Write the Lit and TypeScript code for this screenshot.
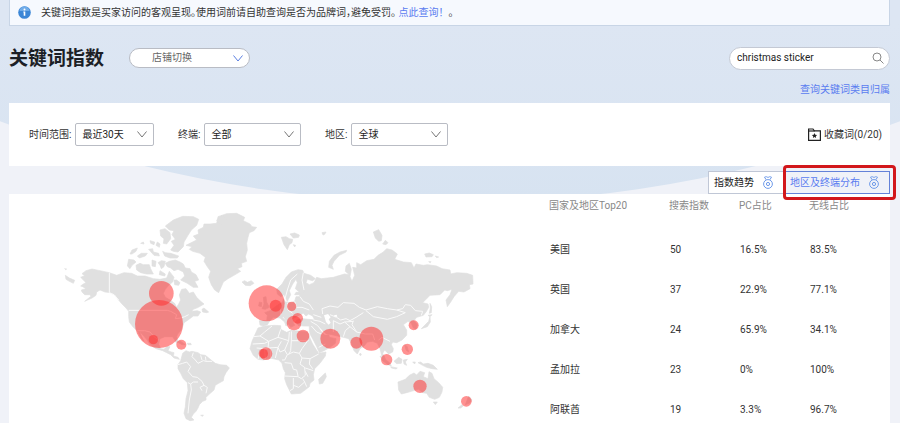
import { LitElement, html, svg, css } from "lit";
import { customElement, property } from "lit/decorators.js";

interface Row {
  country: string;
  index: number;
  pc: string;
  wireless: string;
}

const ROWS: Row[] = [
  { country: "美国", index: 50, pc: "16.5%", wireless: "83.5%" },
  { country: "英国", index: 37, pc: "22.9%", wireless: "77.1%" },
  { country: "加拿大", index: 24, pc: "65.9%", wireless: "34.1%" },
  { country: "孟加拉", index: 23, pc: "0%", wireless: "100%" },
  { country: "阿联酋", index: 19, pc: "3.3%", wireless: "96.7%" },
];

// Land outlines, grouped by region; each group has its own origin on the map.
const AMERICAS = [
  // mainland
  "M92 232L104 227 96 221 108 212 126 207 150 212 178 218 200 226 222 218 245 220 262 228 285 228 310 236 330 238 350 234 358 214 366 224 372 232 368 246 356 256 346 268 340 280 346 292 360 300 374 310 380 322 386 312 392 300 388 285 395 268 408 266 418 280 430 276 440 292 452 304 462 312 445 322 430 328 425 334 442 332 452 336 444 348 430 348 414 360 402 368 398 380 392 392 383 402 380 410 384 424 380 430 374 420 368 410 345 410 330 416 326 432 332 446 342 448 350 440 360 440 354 452 364 456 372 458 370 468 384 472 388 478 372 474 362 464 350 458 338 452 318 446 300 434 290 418 276 402 268 392 274 408 282 424 274 416 262 392 250 382 238 366 236 350 236 334 228 324 216 312 204 298 196 286 182 278 165 276 150 270 140 276 138 286 126 294 104 304 124 288 118 284 104 284 96 276 94 270 108 266 98 260 92 258 100 252 108 248 Z",
  "M46 226L58 234 74 241 70 250 58 244 48 238Z",
  "M44 206L50 207 47 209Z",
  // arctic islands
  "M236 178L252 180 258 186 246 196 240 206 232 198Z",
  "M258 196L270 190 280 194 298 194 302 206 310 222 290 222 272 218 260 210Z",
  "M240 162L246 150 262 144 258 154 246 162Z",
  "M262 168L274 160 292 160 286 168 268 174Z",
  "M300 122L314 126 312 134 302 130Z",
  "M272 130L280 126 282 132Z",
  "M296 148L308 146 310 156 326 160 328 168 312 166Z",
  "M330 90L345 86 360 98 362 116 350 132 340 130 342 116 332 108Z",
  "M346 78L370 60 398 49 430 50 446 58 440 76 424 90 414 106 402 126 400 140 384 156 370 154 362 150 372 136 364 124 376 118 366 104 372 92 358 90Z",
  "M338 154L346 158 362 160 386 168 382 174 360 174 344 168Z",
  "M322 126L330 132 328 142 318 136Z",
  "M306 180L318 184 316 200 306 198Z",
  "M324 188L334 182 346 184 342 200 334 206 330 196Z",
  "M346 190L358 184 376 180 390 186 400 192 406 204 420 206 424 216 438 224 446 240 434 244 444 262 430 262 412 250 392 240 404 228 400 216 384 208 372 212 362 204 352 200Z",
  "M330 212L346 222 344 228 328 224Z",
  "M372 240L380 240 390 248 386 256 374 254Z",
  "M456 328L462 324 476 336 470 338 458 336Z",
  "M378 424L392 424 406 434 396 434Z",
  "M412 430L422 430 424 434 414 434Z",
  // south america
  "M398 460L408 452 418 456 426 454 444 458 452 464 466 466 476 474 488 484 496 490 510 494 530 496 538 504 528 518 522 530 520 542 506 550 496 556 492 570 476 584 468 592 468 600 458 604 448 614 444 624 438 634 430 642 424 652 432 660 420 662 408 656 402 640 406 620 408 596 414 572 412 548 400 536 392 520 384 506 384 494 392 482Z",
  "M452 646L460 645 458 649Z",
  // greenland, iceland
  "M408 136L420 130 440 120 430 108 446 102 444 90 460 82 462 72 480 72 500 70 504 50 530 41 560 40 584 52 580 62 600 72 606 80 620 82 612 92 598 98 594 112 590 130 592 150 586 170 590 184 574 190 576 200 562 206 572 214 552 226 534 236 520 246 514 260 506 278 494 270 484 254 476 232 482 214 472 200 462 184 466 172 450 160 428 154 418 148 426 140Z",
  "M500 60L516 46 530 60 512 76Z",
  "M576 246L584 242 592 247 604 242 612 250 600 257 586 256Z",
];

const EURASIA = [
  "M30 375L28 362 50 362 52 346 44 338 60 332 76 320 88 312 98 306 100 298 106 306 124 308 134 304 138 290 148 290 150 284 134 284 138 277 164 276 148 276 136 266 142 248 138 238 128 252 118 272 122 284 112 304 102 284 92 290 82 282 80 268 96 252 108 232 124 216 144 209 158 211 162 220 182 226 196 236 188 242 172 238 168 248 178 254 192 248 200 232 214 236 232 234 250 232 270 226 284 222 298 224 286 214 288 198 298 190 304 208 300 230 306 244 314 226 308 202 320 204 320 188 332 194 350 182 372 178 384 166 400 156 410 146 426 150 442 162 434 178 460 186 484 188 492 204 498 192 520 196 532 194 560 198 576 206 600 210 602 222 620 218 650 220 668 226 669 252 658 254 660 266 642 276 626 274 612 290 602 306 592 320 588 300 600 284 606 268 592 272 584 270 570 284 540 286 518 308 534 312 536 322 528 336 520 346 500 352 492 362 502 374 498 388 490 384 484 370 474 364 460 374 470 390 470 406 456 420 440 428 428 426 424 434 430 446 428 456 416 462 404 450 398 460 406 476 396 470 390 446 382 430 368 424 352 426 342 438 330 446 322 462 312 452 304 430 296 416 280 412 262 408 246 404 236 402 238 412 258 416 256 430 240 442 222 452 208 458 200 440 190 420 180 402 178 388 178 378 160 378 144 376 136 366 140 360 158 356 176 358 194 360 188 348 176 342 168 348 160 340 150 344 140 350 128 356 130 368 134 376 122 382 112 366 100 350 96 352 110 364 118 370 108 378 104 366 90 354 70 352 60 362 52 374 40 378Z",
  "M40 292L48 290 50 306 58 322 46 328 36 326 42 312Z",
  "M28 306L36 308 34 320 26 318Z",
  // arctic islands
  "M94 112L108 110 118 116 128 118 126 128 118 134 112 149 102 134Z",
  "M120 102L134 99 148 105 146 112 130 114Z",
  "M130 134L137 136 134 141Z",
  "M216 98L228 96 224 103 219 105Z",
  "M236 202L238 184 252 166 270 156 290 151 288 156 268 166 252 184 246 196 250 208Z",
  "M370 96L386 89 396 106 394 122 386 124 376 114Z",
  "M398 132L406 121 414 128 408 134Z",
  "M524 162L538 159 550 164 546 170 528 171Z",
  "M556 168L566 171 560 173Z",
  "M536 185L543 185 541 188Z",
  // east and south-east asia
  "M540 310L545 320 544 338 538 340 541 324Z",
  "M534 346L546 344 540 350Z",
  "M540 350L541 366 532 380 514 386 528 372 536 364Z",
  "M394 432L410 428 424 440 428 452 414 458 406 448 396 446Z",
  "M390 468L402 474 420 490 424 498 414 494 398 482Z",
  "M422 500L442 504 438 507 424 504Z",
  "M432 484L446 472 456 478 454 490 440 491Z",
  "M460 480L472 478 466 486 470 496 462 492Z",
  "M464 434L472 440 476 456 468 450Z",
  "M330 460L334 462 332 467 328 464Z",
  "M504 488L512 486 520 492 534 490 550 496 562 508 546 506 530 502 518 496Z",
  "M488 486L496 486 494 492Z",
  // oceania
  "M444 546L466 538 478 526 492 519 500 525 510 514 524 518 520 530 534 536 537 515 546 520 552 536 566 548 578 562 576 576 568 592 554 598 538 592 530 580 518 578 506 568 484 574 470 578 454 582 446 570Z",
  "M550 606L562 606 556 614Z",
  "M656 588L666 600 658 610 646 614Z",
  "M624 624L636 614 640 618 632 624Z",
];

const AFRICA = [
  "M24 384L44 378 74 376 92 377 92 388 110 397 124 391 152 394 172 396 178 410 188 432 198 448 206 460 228 456 226 468 210 490 194 506 190 524 192 540 180 550 178 560 160 574 152 580 124 582 118 570 110 554 104 536 106 518 100 506 96 490 86 480 60 474 40 480 24 478 10 466 0 446 6 424 14 406Z",
  "M226 519L229 530 218 550 208 552 206 538 214 530Z",
];

const AMERICA_BORDERS =
  "M178 218V278L192 284 206 300M236 331H352L362 334 380 344 376 356 392 354 404 350 416 344M262 392H284L300 396 312 410 326 420M398 490L410 486 422 500 414 514 428 530 442 532 456 544 462 556 472 562 468 580M414 548L422 552 430 546 444 546M422 552L424 570 418 600 414 640M430 458L426 470 436 480 444 490 460 482 468 484 486 484M452 466L456 480M466 470L468 482M384 494L398 490M462 556L450 562 456 572";

const EURASIA_BORDERS =
  "M218 342L216 326 240 318 264 322 280 308 312 310 328 322 348 330 382 320 412 326 440 330 458 326 466 314 482 316 496 332 518 334 514 346M348 332L370 350 412 358 440 350 466 338 440 330M240 344L260 352 272 360 288 356 300 362 318 352 340 338M250 362L270 372 284 366 300 380 286 392 280 410M250 362L250 396M284 366L310 364M300 380L320 396 346 402 368 402 374 420M310 362L306 374 320 396M182 364L202 376 214 390M190 360L210 364 226 372M184 378L200 396 214 402M226 432L206 442M104 300L112 270 122 240 142 222M160 218L156 240 162 270M150 290L160 304 178 312 190 330M134 304L140 322 156 322 178 330M112 308L114 330 128 340M90 314L92 344M190 344L214 352M386 420L396 412 420 424";

const AFRICA_BORDERS =
  "M10 410L30 408 44 396 66 378M30 408L56 424 84 412 92 388M84 412L116 422 118 396M124 394V422H176M56 424L44 430 8 432M56 424L54 444 84 442 94 424M84 442L90 456 104 450 116 422M20 444L44 446 54 444M24 478L28 460M44 446L46 478M62 446V474M84 442L76 474M104 450L112 464 130 456 148 460 156 446 172 424M112 464L104 480H96M148 460L156 474 180 476 206 462M156 474L150 492 166 504 190 512M180 476L178 492 188 506M104 488L124 490 130 508 140 510 144 528M104 528L144 530 154 536 166 526 164 504M130 534V566L120 572M130 556L146 562 164 546 158 536M164 546L170 560M166 514L174 530M116 464L122 452 124 422";

const WATER = [
  "M222 346L234 342 242 352 236 358 242 368 236 374 228 366Z",
  "M208 384L218 392 228 402 238 404 224 404 214 394Z",
  "M252 346L260 344 262 350 254 352Z",
];

// Bubbles: centre x, centre y, radius.
const BUBBLES: [number, number, number][] = [
  [327, 372, 72],
  [334, 280, 37],
  [310, 419, 14],
  [394, 434, 15],
  [650, 310, 54],
  [677, 317, 18],
  [725, 319, 14],
  [732, 369, 22],
  [743, 355, 16],
  [759, 408, 19],
  [841, 416, 30],
  [919, 428, 18],
  [964, 416, 36],
  [648, 461, 19],
  [640, 461, 14],
  [1091, 376, 15],
  [1072, 448, 17],
  [1010, 479, 17],
  [1110, 559, 20],
  [1249, 604, 16],
];

@customElement("world-map")
export class WorldMap extends LitElement {
  static styles = css`
    :host {
      display: block;
    }
    svg {
      display: block;
      width: 100%;
      height: auto;
    }
    .land {
      fill: #e0e0e0;
      stroke: #e0e0e0;
      stroke-width: 2;
      stroke-linejoin: round;
    }
    .border {
      fill: none;
      stroke: #fafafa;
      stroke-width: 3;
      stroke-linejoin: round;
    }
    .water {
      fill: #fff;
    }
    .bubble {
      fill: #ff2d2d;
      fill-opacity: 0.52;
    }
  `;

  render() {
    return html`
      <svg viewBox="-123 -18 1620 687" role="img" aria-label="国家及地区分布">
        <g>
          ${AMERICAS.map((d) => svg`<path class="land" d=${d}></path>`)}
          <path class="border" d=${AMERICA_BORDERS}></path>
        </g>
        <g transform="translate(600 0)">
          ${EURASIA.map((d) => svg`<path class="land" d=${d}></path>`)}
          ${AFRICA.map((d) => svg`<path class="land" d=${d}></path>`)}
          ${WATER.map((d) => svg`<path class="water" d=${d}></path>`)}
          <path class="border" d=${EURASIA_BORDERS}></path>
          <path class="border" d=${AFRICA_BORDERS}></path>
        </g>
        ${BUBBLES.map(
          ([x, y, r]) => svg`<circle class="bubble" cx=${x} cy=${y} r=${r}></circle>`,
        )}
      </svg>
    `;
  }
}

@customElement("drop-down")
export class DropDown extends LitElement {
  @property() label = "";
  @property() value = "";
  @property({ reflect: true }) kind = "box";

  static styles = css`
    :host {
      display: flex;
      align-items: center;
      gap: 4px;
    }
    .label {
      font-size: 10px;
      color: #333;
      white-space: nowrap;
    }
    .field {
      display: grid;
      flex: 1;
      align-items: center;
    }
    select {
      grid-area: 1 / 1;
      appearance: none;
      box-sizing: border-box;
      width: 100%;
      height: 23px;
      margin: 0;
      padding: 0 20px 0 6px;
      border: 1px solid #b9bcc4;
      border-radius: 2px;
      background: #fff;
      color: #222;
      font: inherit;
      font-size: 10px;
    }
    svg {
      grid-area: 1 / 1;
      justify-self: end;
      width: 10px;
      height: 7px;
      margin-right: 7px;
      fill: none;
      stroke: #777;
      pointer-events: none;
    }
    :host([kind="pill"]) select {
      height: 20px;
      padding-left: 22px;
      border-radius: 10px;
      color: #666;
    }
    :host([kind="pill"]) svg {
      stroke: #5b7fe0;
    }
  `;

  render() {
    return html`
      ${this.label ? html`<label class="label" for="s">${this.label}</label>` : ""}
      <span class="field">
        <select id="s" aria-label=${this.label || this.value}>
          <option>${this.value}</option>
        </select>
        <svg viewBox="0 0 10 7" aria-hidden="true"><path d="M.5 .5L5 6 9.500 .5"></path></svg>
      </span>
    `;
  }
}

@customElement("app-root")
export class AppRoot extends LitElement {
  static styles = css`
    :host {
      display: flex;
      flex-direction: column;
      position: relative;
      box-sizing: border-box;
      height: 100vh;
      padding: 0 10px 0 9px;
      overflow: hidden;
      background: #f0f2f8;
      color: #333;
      font-family: Roboto, "Noto Sans CJK SC", sans-serif;
      font-size: 10px;
      line-height: 14px;
    }
    .backdrop {
      position: absolute;
      inset: 0 0 auto 0;
      height: 203px;
      overflow: hidden;
    }
    .backdrop::before {
      content: "";
      position: absolute;
      left: 50%;
      bottom: 0;
      width: 2560px;
      height: 2560px;
      border-radius: 50%;
      background: linear-gradient(to top, #d7e3f1, #dde6f3 180px);
      transform: translateX(-50%);
    }
    .page {
      position: relative;
      display: flex;
      flex-direction: column;
      flex: 1;
      min-height: 0;
    }
    a {
      color: #5a7cf0;
      text-decoration: none;
    }
    .notice {
      display: flex;
      align-items: center;
      gap: 10px;
      height: 26px;
      box-sizing: border-box;
      padding-left: 8px;
      border: 1px solid #c8d5e6;
      border-top: 0;
      background: #f6f9fe;
    }
    .notice p {
      margin: 0;
    }
    .text {
      font-feature-settings: "halt";
    }
    .notice svg {
      width: 13px;
      height: 13px;
    }
    .head {
      display: flex;
      align-items: center;
      height: 24px;
      margin-top: 20px;
    }
    h1 {
      margin: 0 25px 0 0;
      padding-top: 2px;
      font-size: 19px;
      line-height: 24px;
      color: #1c1f26;
    }
    .shop {
      width: 121px;
    }
    .search {
      display: flex;
      align-items: center;
      box-sizing: border-box;
      width: 161px;
      height: 23px;
      margin-left: auto;
      padding: 0 5px 0 7px;
      border: 1px solid #c4c9d4;
      border-radius: 12px;
      background: #fff;
    }
    .search input {
      flex: 1;
      min-width: 0;
      padding: 0;
      border: 0;
      outline: 0;
      background: none;
      color: #222;
      font: inherit;
    }
    button {
      font: inherit;
      cursor: pointer;
    }
    .search button {
      display: flex;
      padding: 0;
      border: 0;
      background: none;
    }
    .search svg {
      width: 12px;
      height: 12px;
    }
    .query {
      align-self: flex-end;
      margin-top: 13px;
    }
    .filters {
      display: flex;
      align-items: center;
      gap: 24px;
      height: 63px;
      margin-top: 6px;
      padding: 0 8px 0 20px;
      background: #fff;
    }
    .range {
      width: 125px;
    }
    .choice {
      width: 123px;
    }
    .saved {
      display: flex;
      align-items: center;
      gap: 3px;
      margin-left: auto;
      padding: 0;
      border: 0;
      background: none;
      color: #333;
    }
    .saved svg {
      width: 13px;
      height: 13px;
    }
    .tabs {
      display: flex;
      justify-content: flex-end;
      align-items: flex-end;
      height: 28px;
    }
    .tab {
      position: relative;
      display: flex;
      align-items: center;
      gap: 8px;
      height: 23px;
      box-sizing: border-box;
      padding: 0 9px 0 5px;
      border: 1px solid #c0c7d6;
      background: #fff;
      color: #222;
    }
    .tab svg {
      width: 12px;
      height: 13px;
    }
    .tab.active {
      border-color: #6482d8;
      background: #f0f2f8;
      color: #5a7cf0;
    }
    .mark {
      position: absolute;
      z-index: 1;
      inset: -7px -7px -7px -2px;
      border: 3px solid #d2171b;
      border-radius: 4px;
      pointer-events: none;
    }
    .panel {
      display: grid;
      grid-template-columns: minmax(0, 1fr) 341px;
      align-items: start;
      flex: 1;
      min-height: 0;
      background: #fff;
    }
    .scores {
      width: 100%;
      border-collapse: collapse;
      table-layout: fixed;
    }
    th,
    td {
      padding: 0;
      text-align: left;
      font-weight: 400;
      white-space: nowrap;
    }
    th {
      height: 36px;
      box-sizing: border-box;
      padding-top: 5px;
      vertical-align: top;
      color: #888;
    }
    td {
      height: 40px;
      padding-left: 1px;
      color: #333;
    }
    .wide {
      width: 120px;
    }
    .narrow {
      width: 70px;
    }
  `;

  private medal() {
    return html`
      <svg viewBox="0 0 12 13" fill="none" stroke="#6f9bea" aria-hidden="true">
        <path d="M2.500 1.200L4.200 3.800M9.500 1.200L7.800 3.800M2.500 1.200C4 .4 4.800 .6 6 1.600 7.200 .6 8 .4 9.500 1.200"></path>
        <circle cx="6" cy="8" r="4.400"></circle>
        <circle cx="6" cy="8" r="1.600"></circle>
      </svg>
    `;
  }

  render() {
    return html`
      <div class="backdrop"></div>
      <main class="page">
        <div class="notice" role="status">
          <svg viewBox="0 0 13 13" aria-hidden="true">
            <circle cx="6.500" cy="6.500" r="6.300" fill="#3b86d6"></circle>
            <path d="M1.500 5a5 4.500 0 0 1 10 0z" fill="#6fabe8"></path>
            <circle cx="6.500" cy="3.600" r="1" fill="#fff"></circle>
            <path d="M5.300 5.400h2v4.300h-1.600v-3.300h-.4z" fill="#fff"></path>
          </svg>
          <p>
            <span class="text">关键词指数是买家访问的客观呈现。使用词前请自助查询是否为品牌词，避免受罚。</span>
            <a href="#query">点此查询！</a>。
          </p>
        </div>

        <header class="head">
          <h1>关键词指数</h1>
          <drop-down class="shop" kind="pill" value="店铺切换"></drop-down>
          <form class="search" @submit=${(e: Event) => e.preventDefault()}>
            <input type="text" aria-label="关键词" .value=${"christmas sticker"} />
            <button aria-label="搜索">
              <svg viewBox="0 0 12 12" fill="none" stroke="#888" aria-hidden="true">
                <circle cx="5" cy="5" r="4"></circle>
                <path d="M8 8l3.500 3.500"></path>
              </svg>
            </button>
          </form>
        </header>
        <a class="query" href="#category">查询关键词类目归属</a>

        <section class="filters">
          <drop-down class="range" label="时间范围:" value="最近30天"></drop-down>
          <drop-down class="choice" label="终端:" value="全部"></drop-down>
          <drop-down class="choice" label="地区:" value="全球"></drop-down>
          <button class="saved">
            <svg viewBox="0 0 13 13" fill="none" stroke="#222" aria-hidden="true">
              <path d="M.6 1h4.400l1.300 1.800h6.100v9.500H.6z" stroke-width="1.200"></path>
              <path d="M.6 3h6" stroke-width="1.200"></path>
              <path d="M6.500 5l.8 1.700 1.800.2-1.300 1.300.3 1.800-1.600-.9-1.600.9.300-1.800L3.900 6.900l1.800-.2z" fill="#222" stroke="none"></path>
            </svg>
            <span>收藏词(0/20)</span>
          </button>
        </section>

        <nav class="tabs">
          <button class="tab">指数趋势 ${this.medal()}</button>
          <button class="tab active">
            地区及终端分布 ${this.medal()}
            <span class="mark"></span>
          </button>
        </nav>

        <section class="panel">
          <world-map></world-map>
          <table class="scores">
            <thead>
              <tr>
                <th class="wide">国家及地区Top20</th>
                <th class="narrow">搜索指数</th>
                <th class="narrow">PC占比</th>
                <th>无线占比</th>
              </tr>
            </thead>
            <tbody>
              ${ROWS.map(
                (r) => html`
                  <tr>
                    <td>${r.country}</td>
                    <td>${r.index}</td>
                    <td>${r.pc}</td>
                    <td>${r.wireless}</td>
                  </tr>
                `,
              )}
            </tbody>
          </table>
        </section>
      </main>
    `;
  }
}
